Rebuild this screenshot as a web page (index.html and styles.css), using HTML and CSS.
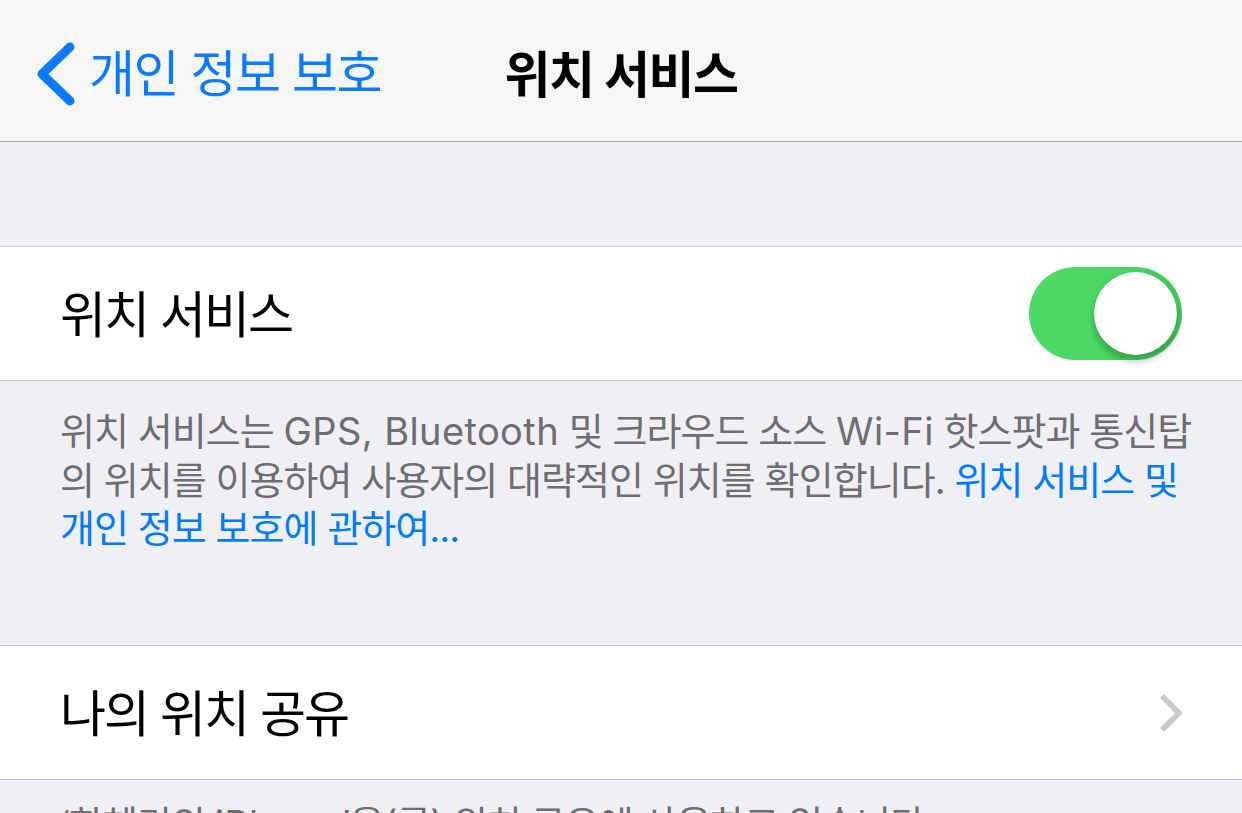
FILE: index.html
```html
<!DOCTYPE html>
<html lang="ko">
<head>
<meta charset="utf-8">
<title>위치 서비스</title>
<link rel="stylesheet" href="styles.css">
</head>
<body>
<header class="navbar">
  <a class="back" href="#">
    <svg class="back-icon" width="44" height="70" viewBox="0 0 44 70" aria-hidden="true">
      <path d="M36 8 L8 35 L36 62" fill="none" stroke="#0a7aff" stroke-width="9" stroke-linecap="round" stroke-linejoin="round"/>
    </svg>
    <span class="back-label">개인 정보 보호</span>
  </a>
  <h1 class="title">위치 서비스</h1>
  <div class="nav-right"></div>
</header>

<main class="content">
  <div class="gap"></div>

  <section class="group">
    <div class="cell">
      <span class="cell-label">위치 서비스</span>
      <div class="switch on"><div class="knob"></div></div>
    </div>
  </section>

  <p class="footer">위치 서비스는 <span class="lat">GPS, Bluetooth</span> 및 크라우드 소스 <span class="lat">Wi-Fi</span> 핫스팟과 통신탑의 위치를 이용하여 사용자의 대략적인 위치를 확인합니다. <a class="link" href="#">위치 서비스 및 개인 정보 보호에 관하여...</a></p>

  <section class="group">
    <a class="cell" href="#">
      <span class="cell-label">나의 위치 공유</span>
      <svg class="chevron" width="26" height="40" viewBox="0 0 26 40" aria-hidden="true">
        <path d="M4 3 L21 20 L4 37" fill="none" stroke="#c7c7cc" stroke-width="5.5"/>
      </svg>
    </a>
  </section>

  <p class="footer footer-second">‘한혜리의 <span class="lat">iPhone</span>’을(를) 위치 공유에 사용하고 있습니다.</p>
</main>
</body>
</html>
```

FILE: styles.css
```css
html, body {
  margin: 0;
  padding: 0;
}

body {
  width: 1242px;
  height: 813px;
  overflow: hidden;
  background: #efeff4;
  font-family: Inter, "Noto Sans CJK KR", sans-serif;
  color: #000;
}

a {
  text-decoration: none;
  color: inherit;
}

.navbar {
  height: 142px;
  box-sizing: border-box;
  background: #f6f6f7;
  border-bottom: 1px solid #a9a9ad;
  display: grid;
  grid-template-columns: 1fr auto 1fr;
  align-items: center;
}

.back {
  display: flex;
  align-items: center;
  padding-left: 34px;
  padding-top: 7px;
  color: #0a7aff;
}

.back-icon {
  display: block;
  flex: none;
}

.back-label {
  margin-left: 11px;
  font-size: 50px;
  letter-spacing: -1.5px;
  line-height: 1;
}

.title {
  margin: 0;
  font-size: 50px;
  font-weight: 700;
  letter-spacing: -1.5px;
  line-height: 1;
  margin-top: 8px;
}

.gap {
  height: 104px;
}

.group {
  background: #fff;
  border-top: 1px solid #c8c7cc;
  border-bottom: 1px solid #c8c7cc;
}

.cell {
  height: 133px;
  padding: 0 60px;
  display: flex;
  align-items: center;
  justify-content: space-between;
}

.cell-label {
  font-size: 50px;
  letter-spacing: -2px;
  line-height: 1;
  margin-top: 2px;
}

.switch {
  width: 153px;
  height: 93px;
  box-sizing: border-box;
  border-radius: 47px;
  padding: 5px;
  display: flex;
  justify-content: flex-end;
  background: #e5e5ea;
  margin-top: -1px;
}

.switch.on {
  background: linear-gradient(90deg, #4cd964 0%, #4ad763 60%, #42c95b 100%);
}

.knob {
  width: 83px;
  height: 83px;
  border-radius: 50%;
  background: #fff;
  box-shadow: 0 8px 6px rgba(0, 0, 0, 0.14), 0 3px 8px rgba(0, 0, 0, 0.12), 0 0 1px rgba(0, 0, 0, 0.2);
}

.chevron {
  display: block;
  margin-right: -2px;
}

.footer {
  margin: 0;
  height: 264px;
  box-sizing: border-box;
  padding: 26px 38px 0 60px;
  font-size: 38px;
  line-height: 48.5px;
  letter-spacing: -0.95px;
  color: #6d6d72;
}

.lat {
  letter-spacing: 0.4px;
}

.link {
  color: #007aff;
}

.footer-second {
  padding-top: 20px;
}
```
